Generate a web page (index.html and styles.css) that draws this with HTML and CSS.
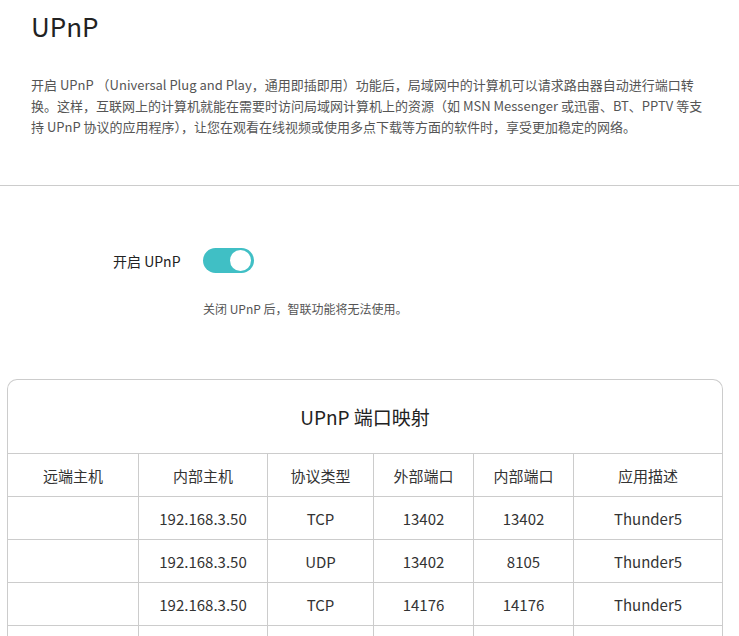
FILE: index.html
```html
<!DOCTYPE html>
<html lang="zh-CN">
<head>
    <meta charset="UTF-8">
    <title>UPnP</title>
    <link rel="stylesheet" href="styles.css">
</head>
<body>
    <!-- 说明 -->
    <div class="intro">
        <h1>UPnP</h1>
        <p>开启 UPnP （Universal Plug and Play，通用即插即用）功能后，局域网中的计算机可以请求路由器自动进行端口转<br>换。这样，互联网上的计算机就能在需要时访问局域网计算机上的资源（如 MSN Messenger 或迅雷、BT、PPTV 等支持 UPnP 协议的应用程序），让您在观看在线视频或使用多点下载等方面的软件时，享受更加稳定的网络。</p>
    </div>

    <!-- 开关 -->
    <div class="setting">
        <div class="setting-row">
            <span class="setting-label">开启 UPnP</span>
            <span class="switch on"><span class="knob"></span></span>
        </div>
        <div class="hint">关闭 UPnP 后，智联功能将无法使用。</div>
    </div>

    <!-- 端口映射 -->
    <div class="card">
        <div class="card-title">UPnP 端口映射</div>
        <table>
            <thead>
                <tr>
                    <th class="c1">远端主机</th>
                    <th class="c2">内部主机</th>
                    <th class="c3">协议类型</th>
                    <th class="c4">外部端口</th>
                    <th class="c5">内部端口</th>
                    <th class="c6">应用描述</th>
                </tr>
            </thead>
            <tbody>
                <tr><td></td><td>192.168.3.50</td><td>TCP</td><td>13402</td><td>13402</td><td>Thunder5</td></tr>
                <tr><td></td><td>192.168.3.50</td><td>UDP</td><td>13402</td><td>8105</td><td>Thunder5</td></tr>
                <tr><td></td><td>192.168.3.50</td><td>TCP</td><td>14176</td><td>14176</td><td>Thunder5</td></tr>
                <tr><td></td><td>192.168.3.50</td><td>UDP</td><td>14176</td><td>14176</td><td>Thunder5</td></tr>
            </tbody>
        </table>
    </div>
</body>
</html>
```

FILE: styles.css
```css
body {
    margin: 0;
    font-family: "Noto Sans CJK SC", "Noto Sans", sans-serif;
    color: #333;
    background: #fff;
}
.intro {
    padding: 0 0 0 31px;
    border-bottom: 1px solid #ccc;
    height: 186px;
    box-sizing: border-box;
}
.intro h1 {
    margin: 0;
    padding-top: 6px;
    font-size: 26px;
    font-weight: normal;
    line-height: 40px;
    color: #222;
}
.intro p {
    width: 678px;
    margin: 28px 0 0;
    font-size: 13px;
    line-height: 21px;
    color: #555;
}
.setting {
    padding: 62px 0 0 113px;
}
.setting-row {
    display: flex;
    align-items: center;
    gap: 22px;
}
.setting-label {
    font-size: 14px;
    color: #222;
}
.switch {
    width: 51px;
    height: 25px;
    border-radius: 13px;
    background-color: #40bfc5;
    position: relative;
}
.switch .knob {
    position: absolute;
    top: 2px;
    right: 3px;
    width: 21px;
    height: 21px;
    border-radius: 50%;
    background: #fff;
}
.hint {
    margin: 27px 0 0 90px;
    font-size: 12px;
    color: #555;
}
.card {
    margin: 62px 16px 0 7px;
    border: 1px solid #ccc;
    border-bottom: none;
    border-radius: 10px 10px 0 0;
}
.card-title {
    height: 73px;
    line-height: 73px;
    text-align: center;
    font-size: 19px;
    color: #222;
}
table {
    width: 100%;
    border-collapse: collapse;
    table-layout: fixed;
}
table th, table td {
    border: 1px solid #ccc;
    height: 42px;
    padding: 0;
    text-align: center;
    font-size: 15px;
    font-weight: normal;
    color: #333;
}
table tr > :first-child {
    border-left: none;
}
table tr > :last-child {
    border-right: none;
}
.c1 { width: 130px; }
.c2 { width: 128px; }
.c3 { width: 105px; }
.c4 { width: 99px; }
.c5 { width: 99px; }
```
